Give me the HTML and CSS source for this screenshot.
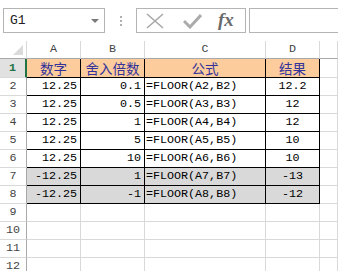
FILE: index.html
```html
<!DOCTYPE html>
<html>
<head>
	<meta charset="UTF-8">
	<title>FLOOR</title>
	<link rel="stylesheet" href="styles.css">
</head>
<body>
	<div class="toolbar">
		<div class="namebox">
			<span class="cellref">G1</span>
			<span class="arrow"></span>
		</div>
		<div class="grip"><i></i><i></i><i></i></div>
		<div class="fbtns">
			<svg class="ico-x" width="18" height="16" viewBox="0 0 18 16">
				<path d="M1 1 L17 15 M17 1 L1 15" stroke="#a8a8a8" stroke-width="1.6" fill="none"/>
			</svg>
			<svg class="ico-ok" width="19" height="16" viewBox="0 0 19 16">
				<path d="M1 8 L7 14 L18 2" stroke="#ababab" stroke-width="3" fill="none"/>
			</svg>
			<span class="fx">fx</span>
		</div>
		<div class="finput"></div>
	</div>

	<table class="sheet">
		<colgroup>
			<col class="w-rh">
			<col class="w-a">
			<col class="w-b">
			<col class="w-c">
			<col class="w-d">
			<col>
		</colgroup>
		<tr class="colhead">
			<th class="corner"><span class="tri"></span></th>
			<th>A</th>
			<th>B</th>
			<th>C</th>
			<th>D</th>
			<th></th>
		</tr>
		<tr class="r1">
			<th class="rh sel">1</th>
			<td class="t hd">数字</td>
			<td class="t hd">舍入倍数</td>
			<td class="t hd">公式</td>
			<td class="t hd">结果</td>
			<td></td>
		</tr>
		<tr>
			<th class="rh">2</th>
			<td class="t num">12.25</td>
			<td class="t num">0.1</td>
			<td class="t fml">=FLOOR(A2,B2)</td>
			<td class="t res">12.2</td>
			<td></td>
		</tr>
		<tr>
			<th class="rh">3</th>
			<td class="t num">12.25</td>
			<td class="t num">0.5</td>
			<td class="t fml">=FLOOR(A3,B3)</td>
			<td class="t res">12</td>
			<td></td>
		</tr>
		<tr>
			<th class="rh">4</th>
			<td class="t num">12.25</td>
			<td class="t num">1</td>
			<td class="t fml">=FLOOR(A4,B4)</td>
			<td class="t res">12</td>
			<td></td>
		</tr>
		<tr>
			<th class="rh">5</th>
			<td class="t num">12.25</td>
			<td class="t num">5</td>
			<td class="t fml">=FLOOR(A5,B5)</td>
			<td class="t res">10</td>
			<td></td>
		</tr>
		<tr>
			<th class="rh">6</th>
			<td class="t num">12.25</td>
			<td class="t num">10</td>
			<td class="t fml">=FLOOR(A6,B6)</td>
			<td class="t res">10</td>
			<td></td>
		</tr>
		<tr class="neg">
			<th class="rh">7</th>
			<td class="t num">-12.25</td>
			<td class="t num">1</td>
			<td class="t fml">=FLOOR(A7,B7)</td>
			<td class="t res">-13</td>
			<td></td>
		</tr>
		<tr class="neg">
			<th class="rh">8</th>
			<td class="t num">-12.25</td>
			<td class="t num">-1</td>
			<td class="t fml">=FLOOR(A8,B8)</td>
			<td class="t res">-12</td>
			<td></td>
		</tr>
		<tr>
			<th class="rh">9</th>
			<td></td><td></td><td></td><td></td><td></td>
		</tr>
		<tr>
			<th class="rh">10</th>
			<td></td><td></td><td></td><td></td><td></td>
		</tr>
		<tr>
			<th class="rh">11</th>
			<td></td><td></td><td></td><td></td><td></td>
		</tr>
		<tr>
			<th class="rh">12</th>
			<td></td><td></td><td></td><td></td><td></td>
		</tr>
	</table>
</body>
</html>
```

FILE: styles.css
```css
body {
	margin: 0;
	padding: 0;
	width: 338px;
	height: 271px;
	overflow: hidden;
	background: #fff;
	font-family: "Liberation Mono", "Noto Sans CJK SC", monospace;
	font-size: 11.7px;
	color: #000;
}

/* formula bar */
.toolbar {
	display: flex;
	align-items: flex-start;
	height: 41px;
	padding-top: 8px;
	box-sizing: border-box;
}

.namebox {
	display: flex;
	align-items: center;
	justify-content: space-between;
	width: 102px;
	height: 25px;
	margin-left: 3px;
	padding: 0 5px 0 6px;
	box-sizing: border-box;
	border: 1px solid #b4b4b4;
}

.cellref {
	font-size: 13px;
	color: #222;
}

.arrow {
	width: 0;
	height: 0;
	border-left: 4px solid transparent;
	border-right: 4px solid transparent;
	border-top: 4px solid #7a7a7a;
}

.grip {
	display: flex;
	flex-direction: column;
	gap: 2px;
	width: 2px;
	margin: 8px 14px 0 15px;
}

.grip i {
	display: block;
	width: 2px;
	height: 2px;
	background: #b0b0b0;
}

.fbtns {
	display: flex;
	align-items: center;
	width: 110px;
	height: 25px;
	box-sizing: border-box;
	border: 1px solid #b4b4b4;
}

.ico-x {
	margin-left: 9px;
}

.ico-ok {
	margin-left: 19px;
}

.fx {
	margin-left: 16px;
	font-family: "Liberation Serif", serif;
	font-style: italic;
	font-weight: bold;
	font-size: 19px;
	color: #6a6a6a;
	line-height: 1;
	margin-top: -2px;
}

.finput {
	flex: 1;
	height: 25px;
	margin-left: 3px;
	box-sizing: border-box;
	border: 1px solid #b4b4b4;
	border-right: none;
}

/* sheet grid */
.sheet {
	table-layout: fixed;
	border-collapse: separate;
	border-spacing: 0;
	width: 338px;
}

.w-rh { width: 27px; }
.w-a { width: 54px; }
.w-b { width: 64px; }
.w-c { width: 121px; }
.w-d { width: 54px; }

.sheet th,
.sheet td {
	height: 18px;
	padding: 0;
	box-sizing: border-box;
	border-right: 1px solid #d9d9d9;
	border-bottom: 1px solid #d9d9d9;
	white-space: nowrap;
	overflow: hidden;
	line-height: 17px;
}

.colhead th {
	height: 18px;
	font-weight: normal;
	color: #444;
	border-bottom-color: #a8a8a8;
	text-align: center;
}

.corner {
	position: relative;
}

.tri {
	position: absolute;
	right: 3px;
	bottom: 3px;
	width: 0;
	height: 0;
	border-left: 10px solid transparent;
	border-bottom: 10px solid #dadada;
}

.rh {
	font-weight: normal;
	color: #444;
	text-align: center;
	border-right-color: #a8a8a8 !important;
}

.r1 th,
.r1 td {
	height: 19px;
	line-height: 18px;
}

.rh.sel {
	background: #e1e1e1;
	color: #217346;
	font-weight: bold;
	border-right: 2px solid #217346 !important;
}

.sheet .t {
	border-right-color: #000;
	border-bottom-color: #000;
}

.hd {
	background: #fccc9c;
	color: #33339a;
	text-align: center;
	font-family: "Noto Sans CJK SC", sans-serif;
	font-size: 13.5px;
}

.num {
	text-align: right;
	padding-right: 3px !important;
}

.fml {
	text-align: left;
	padding-left: 1px !important;
}

.res {
	text-align: center;
}

.neg .t {
	background: #d9d9d9;
}
```
